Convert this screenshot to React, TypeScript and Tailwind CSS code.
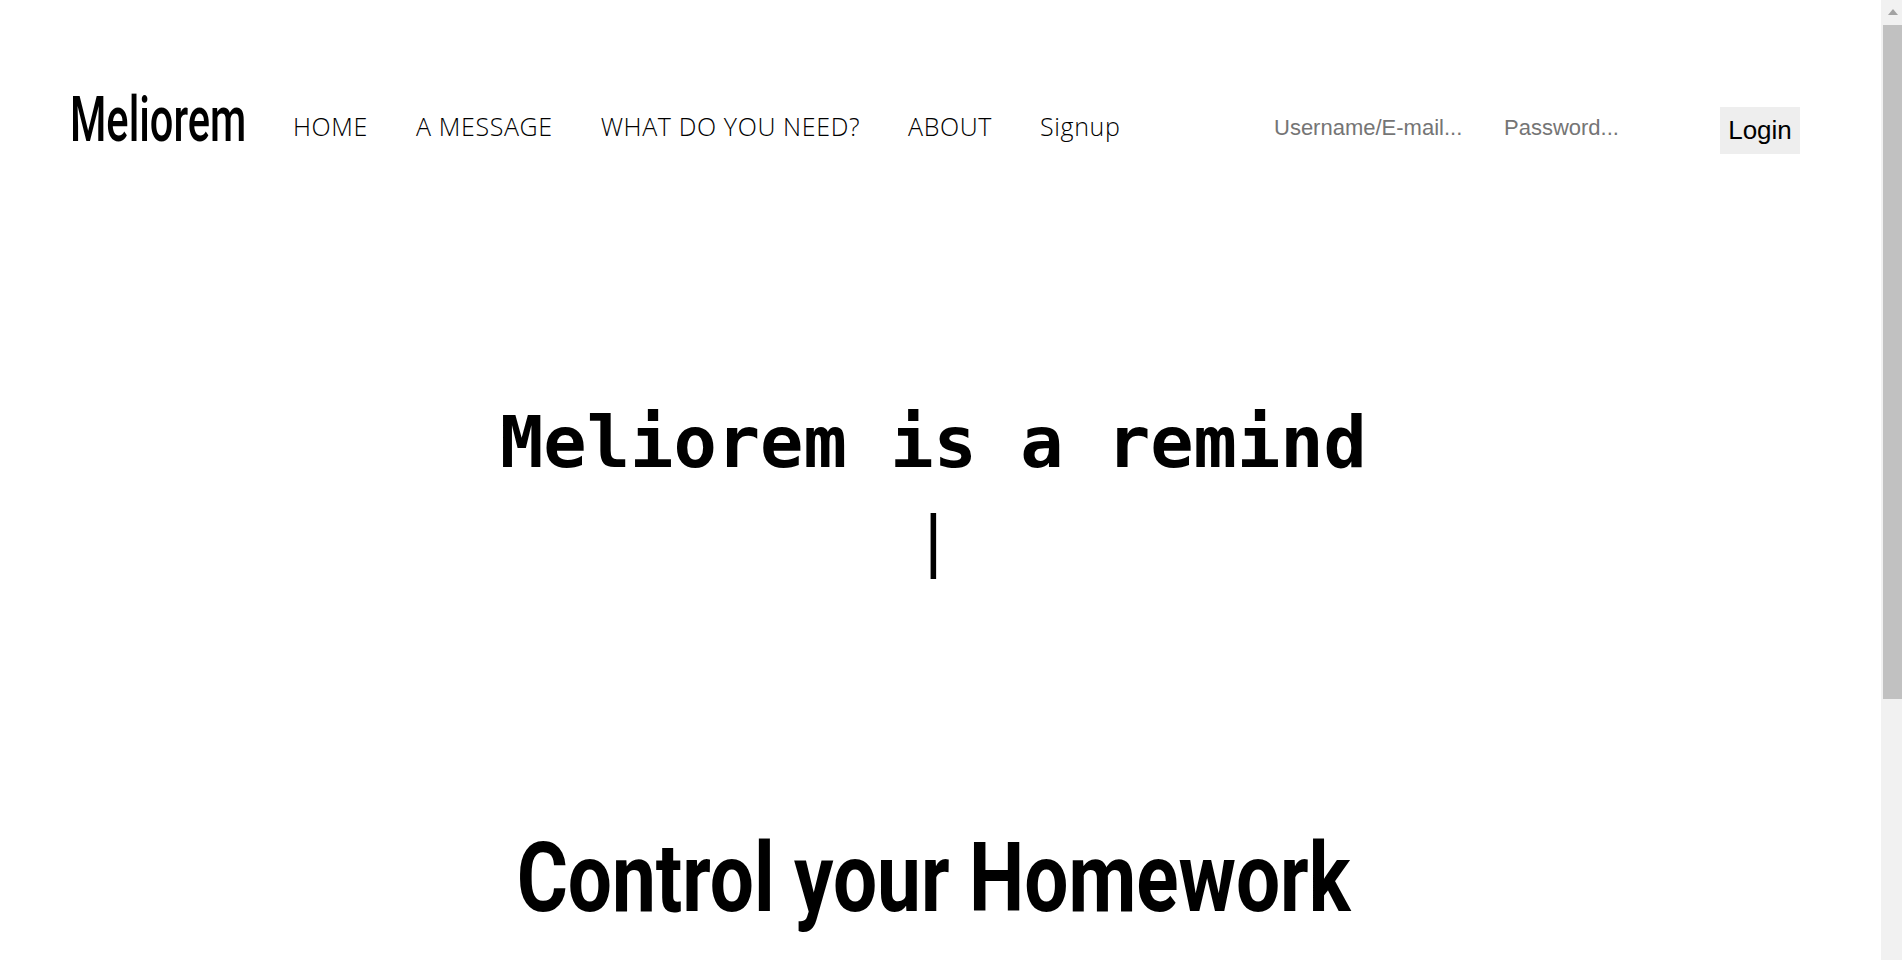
import { useState } from 'react'

const NAV_LINKS = [
  { label: 'HOME', href: '#home' },
  { label: 'A MESSAGE', href: '#message' },
  { label: 'WHAT DO YOU NEED?', href: '#need' },
  { label: 'ABOUT', href: '#about' },
  { label: 'Signup', href: '#signup' },
]

function Header() {
  const [user, setUser] = useState('')
  const [pass, setPass] = useState('')

  return (
    <header className="flex items-center h-[94px] mt-[80px] pl-[70px] pr-[81px]">
      <a href="#home" className="block w-[173px] h-[60px] -mt-[14px] overflow-visible">
        <span className="inline-block origin-left scale-x-[0.66] whitespace-nowrap font-['Roboto',sans-serif] font-medium text-[63px] leading-[60px] text-black">
          Meliorem
        </span>
      </a>
      <nav className="flex items-center ml-[26px] font-['Open_Sans',sans-serif] text-[25px] font-light tracking-[0.025em] text-black">
        {NAV_LINKS.map((link) => (
          <a key={link.label} href={link.href} className="px-[24px]">
            {link.label}
          </a>
        ))}
      </nav>
      <form className="flex items-center ml-auto font-['Liberation_Sans',Arial,sans-serif]" onSubmit={(e) => e.preventDefault()}>
        <input
          type="text"
          value={user}
          onChange={(e) => setUser(e.target.value)}
          placeholder="Username/E-mail..."
          className="w-[230px] text-[22px] outline-none placeholder:text-[#757575] bg-transparent"
        />
        <input
          type="password"
          value={pass}
          onChange={(e) => setPass(e.target.value)}
          placeholder="Password..."
          className="w-[216px] text-[22px] outline-none placeholder:text-[#757575] bg-transparent"
        />
        <button type="submit" className="w-[80px] h-[47px] bg-[#eeeeee] text-black text-[26px] mt-[7px]">
          Login
        </button>
      </form>
    </header>
  )
}

function Scrollbar() {
  return (
    <aside className="w-[21px] h-screen shrink-0 bg-[#f1f1f1] flex flex-col">
      <div className="h-[25px] flex items-center justify-center pl-[2px]">
        <svg width="10" height="6" viewBox="0 0 10 6" className="-mt-[1px]">
          <polygon points="5,0 10,6 0,6" fill="#a3a3a3" />
        </svg>
      </div>
      <div className="ml-[2px] h-[674px] bg-[#c1c1c1]" />
    </aside>
  )
}

export default function App() {
  return (
    <div className="flex h-screen overflow-hidden bg-white">
      <div className="flex-1 min-h-[1310px]">
        <Header />
        <main className="flex flex-col items-center pr-[14px]">
          <section className="mt-[221px] text-center font-['DejaVu_Sans_Mono',monospace] text-black">
            <div className="font-bold text-[72px] leading-[94px]">Meliorem is a remind</div>
            <div className="text-[66px] leading-[94px] mt-[5px]">|</div>
          </section>
          <h2 className="mt-[242px] text-[96px] font-bold text-black leading-none font-['Roboto',sans-serif] scale-x-[0.815] whitespace-nowrap">
            Control your Homework
          </h2>
        </main>
      </div>
      <Scrollbar />
    </div>
  )
}
